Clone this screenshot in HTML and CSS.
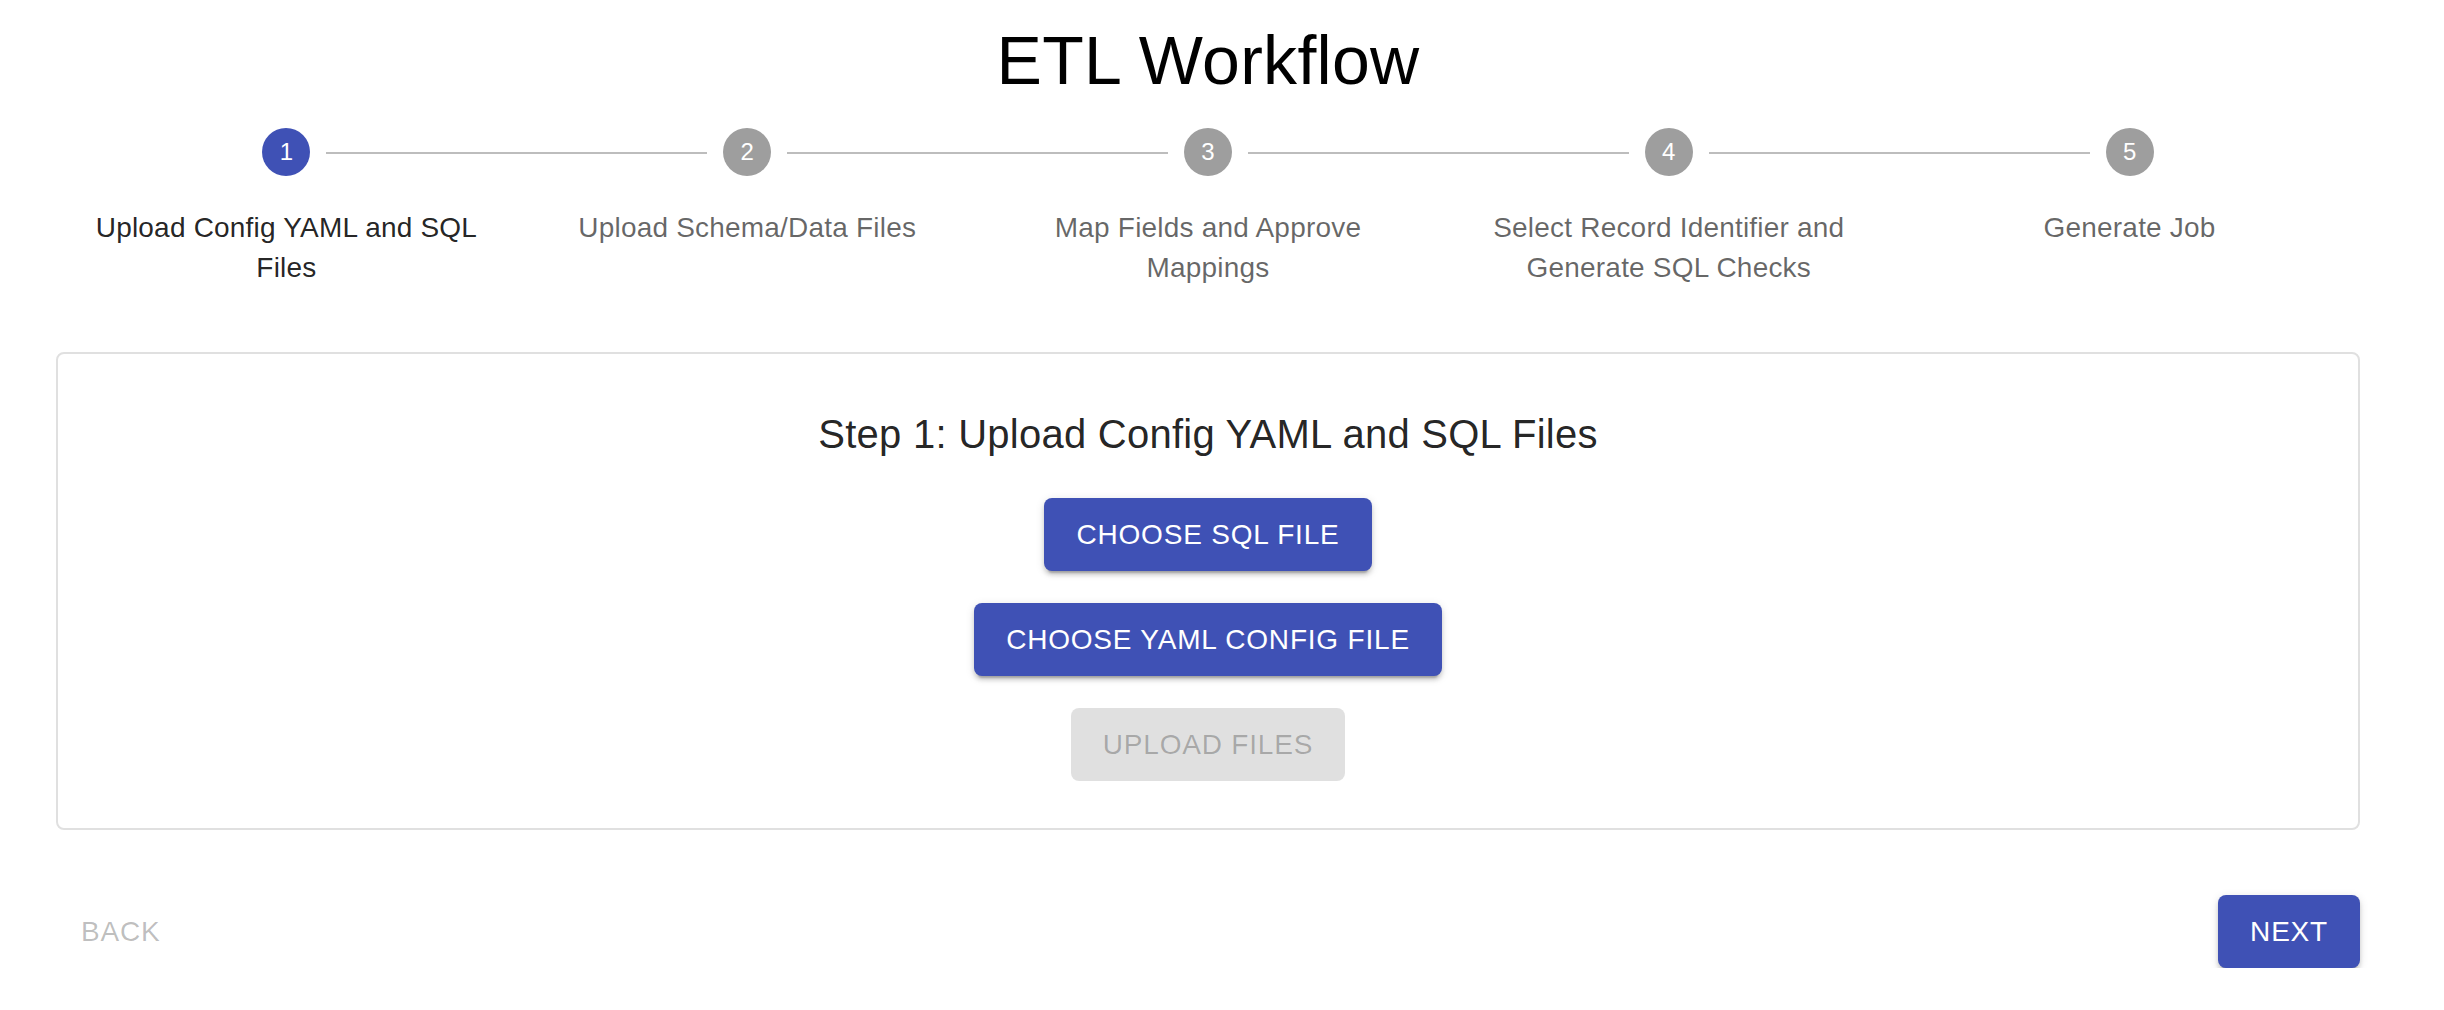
FILE: index.html
```html
<!DOCTYPE html>
<html lang="en">
<head>
<meta charset="utf-8">
<title>ETL Workflow</title>
<link rel="stylesheet" href="styles.css">
</head>
<body>
<main class="page">
  <h1 class="title">ETL Workflow</h1>

  <ol class="stepper">
    <li class="step active">
      <div class="step-icon-row">
        <span class="seg seg-hidden"></span>
        <span class="circle">1</span>
        <span class="seg"></span>
      </div>
      <div class="step-label">Upload Config YAML and SQL Files</div>
    </li>
    <li class="step">
      <div class="step-icon-row">
        <span class="seg"></span>
        <span class="circle">2</span>
        <span class="seg"></span>
      </div>
      <div class="step-label">Upload Schema/Data Files</div>
    </li>
    <li class="step">
      <div class="step-icon-row">
        <span class="seg"></span>
        <span class="circle">3</span>
        <span class="seg"></span>
      </div>
      <div class="step-label">Map Fields and Approve Mappings</div>
    </li>
    <li class="step">
      <div class="step-icon-row">
        <span class="seg"></span>
        <span class="circle">4</span>
        <span class="seg"></span>
      </div>
      <div class="step-label">Select Record Identifier and Generate SQL Checks</div>
    </li>
    <li class="step">
      <div class="step-icon-row">
        <span class="seg"></span>
        <span class="circle">5</span>
        <span class="seg seg-hidden"></span>
      </div>
      <div class="step-label">Generate Job</div>
    </li>
  </ol>

  <section class="card">
    <h2 class="card-heading">Step 1: Upload Config YAML and SQL Files</h2>
    <div class="card-actions">
      <button class="btn btn-contained" type="button">Choose SQL File</button>
      <button class="btn btn-contained" type="button">Choose YAML Config File</button>
      <button class="btn btn-disabled" type="button" disabled>Upload Files</button>
    </div>
  </section>

  <div class="nav-row">
    <button class="btn btn-text-disabled" type="button" disabled>Back</button>
    <button class="btn btn-contained" type="button">Next</button>
  </div>
</main>
</body>
</html>
```

FILE: styles.css
```css
* {
  box-sizing: border-box;
}

html, body {
  margin: 0;
  padding: 0;
  background: #ffffff;
}

body {
  font-family: "Liberation Sans", Arial, Helvetica, sans-serif;
  color: rgba(0, 0, 0, 0.87);
}

.page {
  padding: 20px 84px 0 56px;
}

.title {
  margin: 0;
  font-size: 68px;
  line-height: 80px;
  font-weight: 400;
  letter-spacing: 0.3px;
  text-align: center;
  color: #000;
}

.stepper {
  list-style: none;
  margin: 28px 0 0 0;
  padding: 0;
  display: flex;
}

.step {
  flex: 1 1 0;
  min-width: 0;
  display: flex;
  flex-direction: column;
  align-items: center;
}

.step-icon-row {
  width: 100%;
  display: flex;
  align-items: flex-start;
}

.seg {
  flex: 1 1 0;
  height: 2px;
  margin-top: 24px;
  background: #bdbdbd;
}

.seg-hidden {
  visibility: hidden;
}

.circle {
  flex: 0 0 auto;
  width: 48px;
  height: 48px;
  margin: 0 16px;
  border-radius: 50%;
  background: #9e9e9e;
  color: #fff;
  font-size: 24px;
  line-height: 48px;
  text-align: center;
}

.step.active .circle {
  background: #3f51b5;
}

.step-label {
  margin-top: 32px;
  padding: 0 16px;
  font-size: 28px;
  line-height: 40px;
  letter-spacing: 0.2px;
  text-align: center;
  color: rgba(0, 0, 0, 0.6);
}

.step.active .step-label {
  color: rgba(0, 0, 0, 0.87);
}

.card {
  margin-top: 64px;
  border: 2px solid #e0e0e0;
  border-radius: 8px;
  padding: 47px;
  display: flex;
  flex-direction: column;
  align-items: center;
}

.card-heading {
  margin: 1px 0 32px 0;
  font-size: 40px;
  line-height: 64px;
  font-weight: 400;
  letter-spacing: 0.25px;
  color: rgba(0, 0, 0, 0.87);
}

.card-actions {
  display: flex;
  flex-direction: column;
  align-items: center;
  gap: 32px;
}

.btn {
  font-family: "Liberation Sans", Arial, Helvetica, sans-serif;
  font-size: 28px;
  line-height: 49px;
  letter-spacing: 0.8px;
  text-transform: uppercase;
  padding: 12px 32px;
  border: 0;
  border-radius: 8px;
  background: transparent;
  cursor: pointer;
}

.btn-contained {
  background: #3f51b5;
  color: #fff;
  box-shadow: 0 6px 2px -4px rgba(0, 0, 0, 0.2),
              0 4px 4px 0 rgba(0, 0, 0, 0.14),
              0 2px 10px 0 rgba(0, 0, 0, 0.12);
}

.btn-disabled {
  background: rgba(0, 0, 0, 0.12);
  color: rgba(0, 0, 0, 0.26);
  cursor: default;
}

.btn-text-disabled {
  padding: 12px 16px;
  margin-left: 9px;
  color: rgba(0, 0, 0, 0.26);
  cursor: default;
}

.nav-row {
  margin-top: 65px;
  display: flex;
  justify-content: space-between;
  align-items: center;
}
```
